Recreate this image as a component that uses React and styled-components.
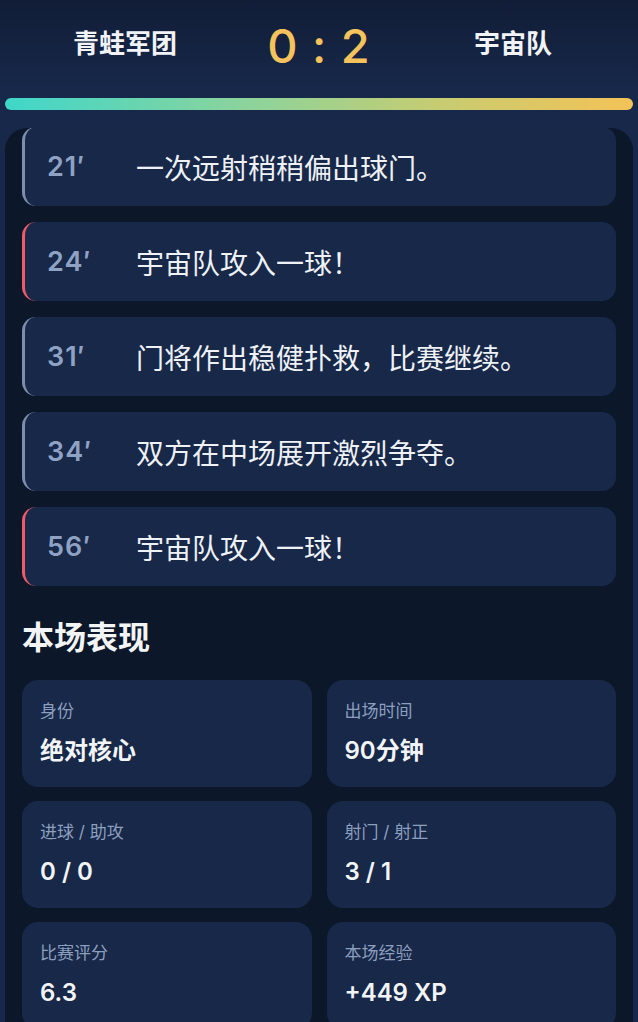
import styled, { createGlobalStyle } from "styled-components";

const GlobalStyle = createGlobalStyle`
  html, body {
    margin: 0;
    padding: 0;
    background: #17284a;
  }
  body {
    font-family: "Inter", "Noto Sans CJK SC", sans-serif;
    color: #f1f3f7;
  }
`;

const Page = styled.div`
  height: 1022px;
  display: flex;
  flex-direction: column;
  overflow: hidden;
  background: linear-gradient(180deg, #111d37 0%, #17284a 90px, #17284a 100%);
`;

const Header = styled.header`
  height: 92px;
  display: grid;
  grid-template-columns: 1fr 138px 1fr;
  align-items: center;
`;

const Team = styled.div`
  text-align: center;
  font-size: 26px;
  font-weight: 700;
  color: #f1f3f7;
  padding-bottom: 10px;
`;

const Score = styled.div`
  text-align: center;
  font-family: "Inter", sans-serif;
  font-size: 47px;
  font-weight: 500;
  letter-spacing: 1px;
  color: #f5c25b;
  padding-bottom: 2px;
`;

const ProgressBar = styled.div`
  margin: 6px 5px 0;
  height: 12px;
  border-radius: 6px;
  background: linear-gradient(90deg, #3ed7c9 0%, #8fd39a 40%, #c8cc70 70%, #f4c258 100%);
`;

const Panel = styled.main`
  flex: 1;
  margin: 18px 5px 0;
  padding: 0 17px;
  background: #0c1829;
  border-radius: 22px 22px 0 0;
  overflow: hidden;
`;

const EventList = styled.div`
  display: flex;
  flex-direction: column;
  gap: 16px;
  margin-top: -1px;
`;

const EventCard = styled.div`
  height: 79px;
  box-sizing: border-box;
  display: flex;
  align-items: center;
  padding-left: 22px;
  background: #172849;
  border-radius: 14px;
  border-left: 3px solid ${({ goal }) => (goal ? "#ee5a68" : "#7d8eab")};
`;

const Minute = styled.span`
  width: 89px;
  flex-shrink: 0;
  font-size: 27px;
  font-weight: 600;
  letter-spacing: 1px;
  color: #8fa2c3;
`;

const EventText = styled.span`
  font-size: 28px;
  color: #eef1f6;
`;

const SectionTitle = styled.h2`
  margin: 30px 0 21px;
  font-size: 32px;
  line-height: 43px;
  font-weight: 700;
  color: #f3f4f6;
`;

const StatGrid = styled.div`
  display: grid;
  grid-template-columns: 1fr 1fr;
  column-gap: 15px;
  row-gap: 14px;
`;

const StatCard = styled.div`
  background: #172849;
  border-radius: 16px;
  padding: 20px 18px 20px;
  display: flex;
  flex-direction: column;
  gap: 12px;
`;

const StatLabel = styled.div`
  font-size: 17px;
  line-height: 23px;
  color: #8d9fbf;
`;

const StatValue = styled.div`
  font-size: 24px;
  line-height: 32px;
  font-weight: 600;
  color: #f3f4f6;
`;

const events = [
  { minute: "21′", text: "一次远射稍稍偏出球门。" },
  { minute: "24′", text: "宇宙队攻入一球！", goal: true },
  { minute: "31′", text: "门将作出稳健扑救，比赛继续。" },
  { minute: "34′", text: "双方在中场展开激烈争夺。" },
  { minute: "56′", text: "宇宙队攻入一球！", goal: true },
];

const stats = [
  { label: "身份", value: "绝对核心" },
  { label: "出场时间", value: "90分钟" },
  { label: "进球 / 助攻", value: "0 / 0" },
  { label: "射门 / 射正", value: "3 / 1" },
  { label: "比赛评分", value: "6.3" },
  { label: "本场经验", value: "+449 XP" },
];

export default function App() {
  return (
    <>
      <GlobalStyle />
      <Page>
        <Header>
          <Team>青蛙军团</Team>
          <Score>0 : 2</Score>
          <Team>宇宙队</Team>
        </Header>
        <ProgressBar />
        <Panel>
          <EventList>
            {events.map((ev, inx) => (
              <EventCard key={inx} goal={ev.goal}>
                <Minute>{ev.minute}</Minute>
                <EventText>{ev.text}</EventText>
              </EventCard>
            ))}
          </EventList>
          <SectionTitle>本场表现</SectionTitle>
          <StatGrid>
            {stats.map((s) => (
              <StatCard key={s.label}>
                <StatLabel>{s.label}</StatLabel>
                <StatValue>{s.value}</StatValue>
              </StatCard>
            ))}
          </StatGrid>
        </Panel>
      </Page>
    </>
  );
}
